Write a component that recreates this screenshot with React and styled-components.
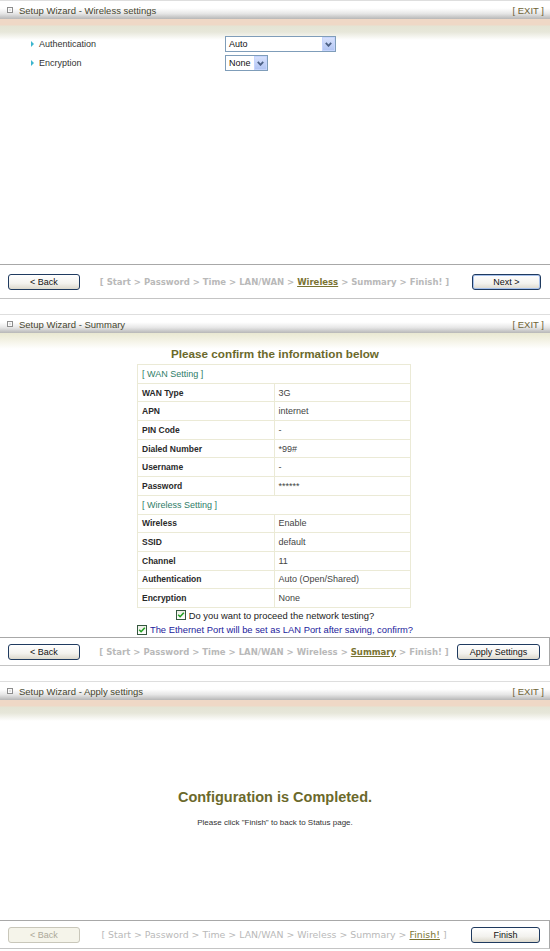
import styled, { createGlobalStyle } from "styled-components";

const GlobalStyle = createGlobalStyle`
  body {
    margin: 0;
    background: #fff;
    font-family: "Liberation Sans", Arial, sans-serif;
  }
`;

const Page = styled.div`
  width: 550px;
  display: flex;
  flex-direction: column;
  gap: 15px;
`;

const Panel = styled.section`
  display: flex;
  flex-direction: column;
`;

const Header = styled.div`
  height: 19px;
  box-sizing: border-box;
  border-top: 1px solid #dedede;
  background: linear-gradient(#fff 0%, #fff 40%, #e6e6e6 70%, #b7b7b7 100%);
  display: flex;
  align-items: center;
  justify-content: space-between;
  padding: 0 6px 0 7px;
  font-size: 9.5px;
  color: #46462f;
`;

const HeaderTitle = styled.div`
  display: flex;
  align-items: center;
  gap: 6px;
`;

const HeaderIcon = styled.span`
  width: 4px;
  height: 4px;
  border: 1px solid #8d8d8d;
  background: #e2e2e2;
  box-shadow: inset 0 0 0 1px #fafafa;
`;

const Exit = styled.span`
  color: #6f6335;
`;

const Content = styled.div`
  height: ${(p) => p.$h}px;
  display: flex;
  flex-direction: column;
  background: ${(p) =>
    p.$tone === "beige"
      ? "linear-gradient(#e9e8d2 0px, #f3f2e4 7px, #fff 16px, #fff 100%)"
      : "linear-gradient(#efd8c6 0px, #efd8c6 6px, #e4e4d4 7px, #e7e7da 13px, #fff 21px, #fff 100%)"};
`;

/* ---- wireless settings form ---- */

const Form = styled.div`
  padding: 17px 0 0 31px;
  display: flex;
  flex-direction: column;
  gap: 3px;
`;

const FormRow = styled.div`
  display: grid;
  grid-template-columns: 194px auto;
  align-items: center;
  height: 16px;
`;

const Label = styled.div`
  display: flex;
  align-items: center;
  gap: 5px;
  font-size: 9px;
  color: #333;
`;

const Bullet = styled.span`
  width: 0;
  height: 0;
  border-top: 3px solid transparent;
  border-bottom: 3px solid transparent;
  border-left: 3px solid #3cb6cf;
`;

const SelectBox = styled.div`
  width: ${(p) => p.$w}px;
  height: 16px;
  box-sizing: border-box;
  border: 1px solid #7f9db9;
  background: #fff;
  display: flex;
  align-items: center;
  justify-content: space-between;
  font-size: 9px;
  color: #111;
  padding-left: 3px;
`;

const SelectArrow = styled.span`
  width: 13px;
  height: 14px;
  box-sizing: border-box;
  background: linear-gradient(#d7e1fc, #b2c5f3);
  border: 1px solid #c6d5fd;
  display: flex;
  align-items: center;
  justify-content: center;
`;

const Select = ({ w, value }) => (
  <SelectBox $w={w}>
    {value}
    <SelectArrow>
      <svg width="7" height="5" viewBox="0 0 7 5">
        <path d="M0.8 0.8 L3.5 3.8 L6.2 0.8" fill="none" stroke="#4d6185" strokeWidth="1.8" />
      </svg>
    </SelectArrow>
  </SelectBox>
);

/* ---- summary ---- */

const Title = styled.h2`
  margin: 14px 0 3px;
  line-height: 14px;
  font-size: 11.7px;
  font-weight: bold;
  text-align: center;
  color: #6b692b;
`;

const Table = styled.table`
  width: 274px;
  margin: 0 0 0 137px;
  border-collapse: collapse;
  border: 1px solid #ebead6;
  font-size: 9px;
`;

const Cell = styled.td`
  height: 17.7px;
  padding: 0 0 0 4px;
  border: 1px solid #ebead6;
  width: 50%;
  color: ${(p) => (p.$label ? "#2a2a2a" : "#444")};
  font-weight: ${(p) => (p.$label ? "bold" : "normal")};
  font-size: ${(p) => (p.$label ? "8.5px" : "9px")};
`;

const SectionCell = styled.td`
  height: 17.7px;
  padding: 0 0 0 4px;
  border: 1px solid #ebead6;
  color: #2f7d68;
  font-size: 9px;
`;

const CheckLine = styled.label`
  height: 15px;
  display: flex;
  align-items: center;
  justify-content: center;
  gap: 3px;
  font-size: 9.4px;
  color: ${(p) => (p.$blue ? "#1c1c9c" : "#222")};
`;

const CheckBox = styled.span`
  width: 10px;
  height: 10px;
  box-sizing: border-box;
  border: 1px solid #35573f;
  background: linear-gradient(#eeeee6, #fff);
  display: flex;
  align-items: center;
  justify-content: center;
`;

const Check = () => (
  <CheckBox>
    <svg width="8" height="8" viewBox="0 0 8 8">
      <path d="M1.2 3.8 L3.1 5.7 L6.8 1.8" fill="none" stroke="#21a121" strokeWidth="1.6" />
    </svg>
  </CheckBox>
);

/* ---- apply settings ---- */

const Done = styled.div`
  flex: 1;
  display: flex;
  flex-direction: column;
  align-items: center;
  justify-content: center;
  gap: 11px;
  padding-bottom: 4px;
`;

const DoneTitle = styled.h2`
  margin: 0;
  line-height: 18px;
  font-size: 14.5px;
  font-weight: bold;
  color: #6b692b;
`;

const DoneText = styled.p`
  margin: 0;
  line-height: 12px;
  font-size: 8px;
  color: #333;
`;

/* ---- bottom navigation ---- */

const Nav = styled.div`
  height: ${(p) => p.$h}px;
  box-sizing: border-box;
  border-top: 1px solid #a8a8a8;
  border-bottom: 1px solid #c4c4c4;
  border-right: ${(p) => (p.$edge ? "1px solid #a8a8a8" : "0")};
  display: grid;
  grid-template-columns: 1fr auto 1fr;
  align-items: center;
  padding: 0 9px 0 8px;
`;

const Button = styled.button`
  width: ${(p) => p.$w}px;
  height: 16px;
  padding: 0;
  justify-self: ${(p) => (p.$right ? "end" : "start")};
  font-family: "Liberation Sans", Arial, sans-serif;
  font-size: 9px;
  border-radius: 3px;
  border: 1px solid #1f3a5f;
  color: #111;
  background: linear-gradient(#fff 0%, #f3f2ee 60%, #dcd8cc 100%);
  box-shadow: ${(p) => (p.$focus ? "inset 0 0 0 1px #a7c1ec" : "none")};

  &:disabled {
    border-color: #c9c7ba;
    color: #aca899;
    background: #f5f4ea;
  }
`;

const Crumbs = styled.div`
  font-family: "DejaVu Sans", Verdana, sans-serif;
  font-size: ${(p) => (p.$bold ? "8.5px" : "9.4px")};
  font-weight: ${(p) => (p.$bold ? "bold" : "normal")};
  color: #b9b9b9;
  white-space: pre;
`;

const Current = styled.span`
  color: #7a7332;
  text-decoration: underline;
`;

const steps = ["Start", "Password", "Time", "LAN/WAN", "Wireless", "Summary", "Finish!"];

const Breadcrumb = ({ current, bold }) => (
  <Crumbs $bold={bold}>
    {"[ "}
    {steps.map((s, i) => (
      <span key={s}>
        {i > 0 && " > "}
        {i === current ? <Current>{s}</Current> : s}
      </span>
    ))}
    {" ]"}
  </Crumbs>
);

const PanelHeader = ({ title }) => (
  <Header>
    <HeaderTitle>
      <HeaderIcon />
      {title}
    </HeaderTitle>
    <Exit>[ EXIT ]</Exit>
  </Header>
);

const summary = [
  { section: "[ WAN Setting ]" },
  { label: "WAN Type", value: "3G" },
  { label: "APN", value: "internet" },
  { label: "PIN Code", value: "-" },
  { label: "Dialed Number", value: "*99#" },
  { label: "Username", value: "-" },
  { label: "Password", value: "******" },
  { section: "[ Wireless Setting ]" },
  { label: "Wireless", value: "Enable" },
  { label: "SSID", value: "default" },
  { label: "Channel", value: "11" },
  { label: "Authentication", value: "Auto (Open/Shared)" },
  { label: "Encryption", value: "None" },
];

export default function App() {
  return (
    <Page>
      <GlobalStyle />

      <Panel>
        <PanelHeader title="Setup Wizard - Wireless settings" />
        <Content $h={245}>
          <Form>
            <FormRow>
              <Label>
                <Bullet />
                Authentication
              </Label>
              <Select w={111} value="Auto" />
            </FormRow>
            <FormRow>
              <Label>
                <Bullet />
                Encryption
              </Label>
              <Select w={43} value="None" />
            </FormRow>
          </Form>
        </Content>
        <Nav $h={35}>
          <Button $w={72}>&lt; Back</Button>
          <Breadcrumb current={4} bold />
          <Button $w={69} $right $focus>Next &gt;</Button>
        </Nav>
      </Panel>

      <Panel>
        <PanelHeader title="Setup Wizard - Summary" />
        <Content $h={304} $tone="beige">
          <Title>Please confirm the information below</Title>
          <Table>
            <tbody>
              {summary.map((r, i) =>
                r.section ? (
                  <tr key={i}>
                    <SectionCell colSpan={2}>{r.section}</SectionCell>
                  </tr>
                ) : (
                  <tr key={i}>
                    <Cell $label>{r.label}</Cell>
                    <Cell>{r.value}</Cell>
                  </tr>
                )
              )}
            </tbody>
          </Table>
          <CheckLine>
            <Check />
            Do you want to proceed the network testing?
          </CheckLine>
          <CheckLine $blue>
            <Check />
            The Ethernet Port will be set as LAN Port after saving, confirm?
          </CheckLine>
        </Content>
        <Nav $h={29} $edge>
          <Button $w={72}>&lt; Back</Button>
          <Breadcrumb current={5} bold />
          <Button $w={83} $right>Apply Settings</Button>
        </Nav>
      </Panel>

      <Panel>
        <PanelHeader title="Setup Wizard - Apply settings" />
        <Content $h={220}>
          <Done>
            <DoneTitle>Configuration is Completed.</DoneTitle>
            <DoneText>Please click "Finish" to back to Status page.</DoneText>
          </Done>
        </Content>
        <Nav $h={29} $edge>
          <Button $w={72} disabled>&lt; Back</Button>
          <Breadcrumb current={6} />
          <Button $w={69} $right>Finish</Button>
        </Nav>
      </Panel>
    </Page>
  );
}
